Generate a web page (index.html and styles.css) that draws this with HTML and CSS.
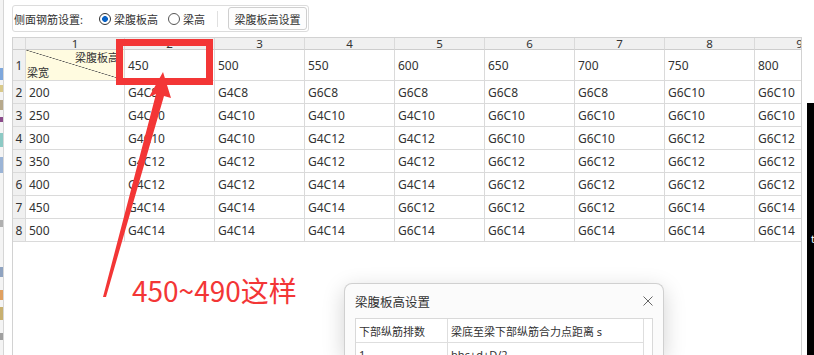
FILE: index.html
```html
<!DOCTYPE html>
<html lang="zh-CN">
<head>
  <meta charset="UTF-8" />
  <meta name="viewport" content="width=device-width, initial-scale=1.0"/>
  <title>侧面钢筋设置</title>
  <link rel="stylesheet" href="styles.css">
</head>
<body>
  <div class="app">
    <div class="edge"></div>

    <div class="panel">
      <div class="toolbar">
        <span class="label">侧面钢筋设置:</span>
        <label class="radio first"><span class="dot on"></span>梁腹板高</label>
        <label class="radio"><span class="dot"></span>梁高</label>
        <span class="sep"></span>
        <button class="btn">梁腹板高设置</button>
      </div>

      <div class="sheet">
        <div class="grid" id="grid">
          <!-- cells are filled in by the script below -->
        </div>
      </div>
    </div>
  </div>

  <div class="blackwin"><span>t</span></div>

  <!-- red annotation drawn over the sheet -->
  <svg class="mark" width="814" height="355" viewBox="0 0 814 355">
    <rect x="119.5" y="42.5" width="90" height="39" fill="none" stroke="#f33636" stroke-width="7"/>
    <polygon points="163,72 171,98 164,96 106,297 103,297 156,94 149,97" fill="#f33636"/>
  </svg>
  <div class="note">450~490这样</div>

  <div class="dialog">
    <div class="dlg-head">
      <span>梁腹板高设置</span>
      <svg class="close" width="10" height="10" viewBox="0 0 10 10">
        <path d="M0.5 0.5 L9.5 9.5 M9.5 0.5 L0.5 9.5" stroke="#666" stroke-width="1" fill="none"/>
      </svg>
    </div>
    <div class="dlg-table">
      <div class="dcell">下部纵筋排数</div>
      <div class="dcell">梁底至梁下部纵筋合力点距离 s</div>
      <div class="dcell bar"></div>
      <div class="dcell">1</div>
      <div class="dcell">bhc+d+D/2</div>
      <div class="dcell bar"></div>
    </div>
  </div>

  <script>
    const heights = [450, 500, 550, 600, 650, 700, 750, 800];
    const rows = [
      [200, 'G4C8', 'G4C8', 'G6C8', 'G6C8', 'G6C8', 'G6C8', 'G6C10', 'G6C10'],
      [250, 'G4C10', 'G4C10', 'G4C10', 'G4C10', 'G6C10', 'G6C10', 'G6C10', 'G6C10'],
      [300, 'G4C10', 'G4C10', 'G4C12', 'G4C12', 'G6C10', 'G6C10', 'G6C12', 'G6C12'],
      [350, 'G4C12', 'G4C12', 'G4C12', 'G4C12', 'G6C12', 'G6C12', 'G6C12', 'G6C12'],
      [400, 'G4C12', 'G4C12', 'G4C14', 'G4C14', 'G6C12', 'G6C12', 'G6C12', 'G6C12'],
      [450, 'G4C14', 'G4C14', 'G4C14', 'G6C12', 'G6C12', 'G6C12', 'G6C14', 'G6C14'],
      [500, 'G4C14', 'G4C14', 'G4C14', 'G6C14', 'G6C14', 'G6C14', 'G6C14', 'G6C14']
    ];

    const grid = document.getElementById('grid');
    let html = '<div class="cell head"></div>';

    for (let c = 1; c <= 9; c++) {
      html += `<div class="cell head">${c}</div>`;
    }

    html += '<div class="cell rowhead">1</div>';
    html += '<div class="cell diag"><span class="top">梁腹板高</span><span class="bottom">梁宽</span></div>';
    heights.forEach(h => {
      html += `<div class="cell">${h}</div>`;
    });

    rows.forEach((row, i) => {
      html += `<div class="cell rowhead">${i + 2}</div>`;
      row.forEach(v => {
        html += `<div class="cell">${v}</div>`;
      });
    });

    grid.innerHTML = html;
  </script>
</body>
</html>
```

FILE: styles.css
```css
body {
  margin: 0;
  font-family: "Noto Sans", "Noto Sans CJK SC", sans-serif;
  font-size: 12px;
  color: #333;
  background: #fff;
  overflow: hidden;
}

.app {
  display: flex;
  height: 355px;
}

.edge {
  width: 3px;
  border-right: 1px solid #d6d6d6;
  background: linear-gradient(to bottom,
    #f4f4f4 0 68px, #7ea7dc 68px 80px, #f4f4f4 80px 85px,
    #d9c98a 85px 92px, #f4f4f4 92px 100px, #b7a98c 100px 110px,
    #f4f4f4 110px 117px, #8a4a8a 117px 122px, #f4f4f4 122px 133px,
    #8cc9c4 133px 147px, #f4f4f4 147px 157px, #9bb4d6 157px 173px,
    #f4f4f4 173px 220px, #b0b0b0 220px 227px, #f4f4f4 227px 267px,
    #8fa3c0 267px 277px, #f4f4f4 277px 290px, #e0a060 290px 300px,
    #f4f4f4 300px 307px, #c8b070 307px 320px, #f4f4f4 320px 333px,
    #a0a0a0 333px 340px, #f4f4f4 340px);
}

.panel {
  margin-left: 8px;
  width: 790px;
  display: flex;
  flex-direction: column;
}

.toolbar {
  margin-top: 5px;
  width: 297px;
  height: 27px;
  box-sizing: border-box;
  border: 1px solid #dcdcdc;
  border-radius: 3px;
  display: flex;
  align-items: center;
  padding-left: 1px;
  font-size: 11px;
  flex-shrink: 0;
}

.radio {
  display: flex;
  align-items: center;
  gap: 3px;
  margin-left: 10px;
}

.radio.first {
  margin-left: 16px;
}

.dot {
  width: 12px;
  height: 12px;
  box-sizing: border-box;
  border: 1px solid #555;
  border-radius: 50%;
  background: #fff;
}

.dot.on {
  border-color: #333;
  background: radial-gradient(circle, #0b63c5 0 2.6px, #fff 3.2px);
}

.sep {
  width: 1px;
  height: 16px;
  background: #e0e0e0;
  margin-left: 12px;
}

.btn {
  margin-left: 10px;
  width: 79px;
  height: 23px;
  padding: 0;
  border: 1px solid #cfcfcf;
  border-radius: 3px;
  background: #fdfdfd;
  font-family: inherit;
  font-size: 11px;
  color: #333;
}

.sheet {
  margin-top: 5px;
  flex: 1;
  border: 1px solid #d2d2d2;
  border-bottom: none;
  overflow: hidden;
}

.grid {
  display: grid;
  grid-template-columns: 13px 99px repeat(8, 90px);
  grid-template-rows: 12px 31px repeat(7, 23px);
  width: max-content;
}

.cell {
  box-sizing: border-box;
  border-right: 1px solid #dadada;
  border-bottom: 1px solid #dadada;
  display: flex;
  align-items: center;
  padding-left: 3px;
  white-space: nowrap;
  overflow: hidden;
  background: #fff;
}

.cell.head {
  background: #f0f0f0;
  justify-content: center;
  padding-left: 0;
  font-size: 11.5px;
  line-height: 11px;
  overflow: visible;
  border-bottom-color: #cdcdcd;
}

.cell.rowhead {
  background: #f0f0f0;
  justify-content: center;
  padding-left: 0;
}

.cell.diag {
  flex-direction: column;
  align-items: stretch;
  justify-content: space-between;
  padding: 1px 5px 0 1px;
  font-size: 11px;
  line-height: 14px;
  background: linear-gradient(to top right, #fffbe0 calc(50% - 0.6px), #555 50%, #fffbe0 calc(50% + 0.6px));
}

.diag .top {
  align-self: flex-end;
}

.diag .bottom {
  align-self: flex-start;
}

.blackwin {
  position: absolute;
  left: 807px;
  top: 103px;
  width: 7px;
  height: 252px;
  background: #000;
  overflow: hidden;
}

.blackwin span {
  display: block;
  margin: 128px 0 0 4px;
  color: #fff;
  font-size: 11px;
}

.mark {
  position: absolute;
  left: 0;
  top: 0;
  pointer-events: none;
}

.note {
  position: absolute;
  left: 132px;
  top: 276px;
  font-family: "Noto Sans CJK SC", sans-serif;
  font-size: 28px;
  line-height: 28px;
  color: #f33636;
}

.dialog {
  position: absolute;
  left: 344px;
  top: 283px;
  width: 320px;
  height: 72px;
  box-sizing: border-box;
  overflow: hidden;
  background: #fbfbfb;
  border: 1px solid #d0d0d0;
  border-bottom: none;
  border-radius: 8px 8px 0 0;
  box-shadow: 0 6px 22px rgba(0, 0, 0, 0.18);
}

.dlg-head {
  height: 34px;
  display: flex;
  align-items: center;
  justify-content: space-between;
  padding: 0 10px;
  font-size: 12.5px;
  color: #333;
}

.dlg-table {
  margin: 0 10px;
  border: 1px solid #d9d9d9;
  border-right: none;
  background: #fff;
  display: grid;
  grid-template-columns: 92px 196px 1fr;
  grid-template-rows: 24px 23px;
  font-size: 11px;
}

.dcell {
  box-sizing: border-box;
  border-right: 1px solid #dedede;
  border-bottom: 1px solid #dedede;
  display: flex;
  align-items: center;
  padding-left: 3px;
  white-space: nowrap;
}

.dcell.bar {
  border-bottom: none;
  border-right: 1px solid #d9d9d9;
}
```
